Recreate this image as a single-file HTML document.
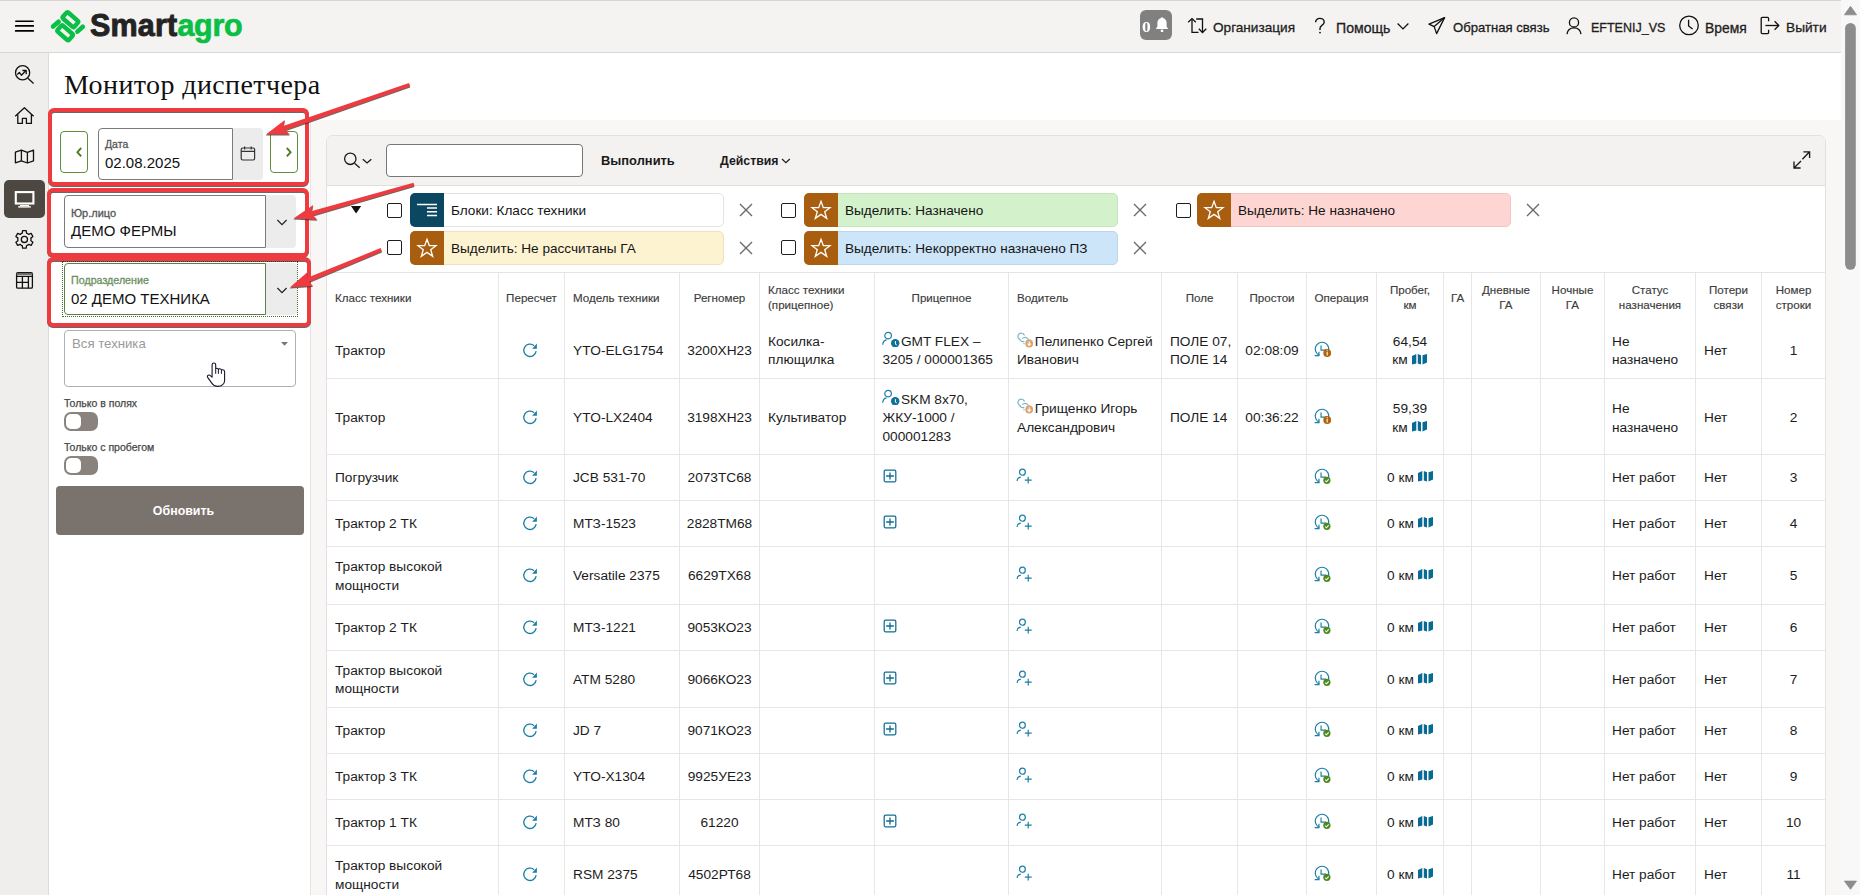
<!DOCTYPE html>
<html><head><meta charset="utf-8">
<style>
*{box-sizing:border-box}
html,body{margin:0;padding:0}
body{width:1860px;height:895px;overflow:hidden;position:relative;background:#fff;font-family:"Liberation Sans",sans-serif;color:#1c1c1c}
.a{position:absolute}
#hdr{left:0;top:0;width:1841px;height:53px;background:#f4f3f1;border-top:1px solid #d6d6d6;border-bottom:1px solid #d9d7d4}
#nav{left:0;top:53px;width:48px;height:842px;background:#efeeec}
#title{left:64px;top:68px;font-family:"Liberation Serif",serif;font-size:28px;letter-spacing:0.4px;color:#111;white-space:nowrap;line-height:34px}
#panel{left:49px;top:120px;width:262px;height:775px;background:#fff;border-right:1px solid #e4e4e4}
#content{left:311px;top:120px;width:1530px;height:775px;background:#f8f7f6}
#sb{left:1841px;top:0;width:19px;height:895px;background:#f8f8f8}
.hi{font-weight:400;-webkit-text-stroke:0.3px #1e1e1e;font-size:13px;color:#1e1e1e;white-space:nowrap;top:19.5px;line-height:16px}
.red{border:4px solid #ee393e;border-radius:5px}
.hc{display:flex;align-items:center;font-size:11.6px;line-height:14.4px;color:#3c3c3c;padding-top:0.5px;-webkit-text-stroke:0.15px #3c3c3c}
.bc{display:flex;align-items:center;font-size:13.7px;line-height:18.2px;color:#1c1c1c;white-space:nowrap;padding-top:2px}
</style></head><body>

<div id="hdr" class="a"></div>
<div id="nav" class="a"></div>
<div id="title" class="a">Монитор диспетчера</div>
<div id="panel" class="a"></div>
<div id="content" class="a"></div>
<div id="sb" class="a"></div>
<div class="a" style="left:48px;top:53px;width:1px;height:842px;background:#dcdbd9"></div>


<!-- nav icons -->
<svg class="a" style="left:0;top:52px" width="48" height="260" viewBox="0 52 48 260" fill="none" stroke="#111" stroke-width="1.3" stroke-linejoin="round">
 <circle cx="22.6" cy="72.7" r="7.1"/><path d="M27.9 78.3L33.6 83.6"/>
 <path d="M17.2 74.6L19.3 72.4L21.4 75.2L25.8 70.8"/><path d="M22.4 70.5H26.2V74.2"/>
 <path d="M15.2 116.3L24.4 107.8L33.6 116.3"/><path d="M17.8 114.2V123.4H22.4V118.4H26.4V123.4H31.4V114.2"/>
 <path d="M15.4 152.2L21.4 150.1L27.4 152.4L33.5 150.1V160.8L27.4 163L21.4 160.8L15.4 162.9Z"/><path d="M21.4 150.1V160.8M27.4 152.4V163"/>
 <path d="M21.18 233.64 L22.26 233.16 L22.61 230.58 L26.19 230.58 L26.54 233.16 L27.78 233.73 L28.74 234.43 L31.14 233.44 L32.93 236.54 L30.88 238.13 L31.00 239.49 L30.88 240.67 L32.93 242.26 L31.14 245.36 L28.74 244.37 L27.62 245.16 L26.54 245.64 L26.19 248.22 L22.61 248.22 L22.26 245.64 L21.02 245.07 L20.06 244.37 L17.66 245.36 L15.87 242.26 L17.92 240.67 L17.80 239.31 L17.92 238.13 L15.87 236.54 L17.66 233.44 L20.06 234.43Z" stroke-width="1.3"/><circle cx="24.4" cy="239.4" r="3.1"/>
 <rect x="16.6" y="272.6" width="15.8" height="15.6" rx="1.2"/><path d="M16.6 273.9H32.4" stroke="#666" stroke-width="2"/>
 <path d="M16.8 276.4H32.2M16.8 282.4H28.4M22.4 276.4V288.2M28.4 276.4V288.2"/>
</svg>
<div class="a" style="left:4px;top:180px;width:41px;height:38px;background:#4d4742;border-radius:5px"></div>
<svg class="a" style="left:4px;top:180px" width="41" height="38" viewBox="4 180 41 38" fill="none" stroke="#fff">
 <rect x="15.8" y="192.1" width="17.6" height="11.4" stroke-width="2.1"/>
 <path d="M20 205.5H29" stroke-width="1"/><path d="M18.2 206.9H30.8" stroke-width="1.4"/>
</svg>


<!-- table start -->
<div class="a" style="left:326px;top:135px;width:1500px;height:780px;background:#fff;border:1px solid #e2e1df;border-radius:7px 7px 0 0"></div>
<div class="a" style="left:327px;top:136px;width:1498px;height:50px;background:#f3f2f0;border-bottom:1px solid #e0dfdd;border-radius:6px 6px 0 0"></div>
<svg class="a" style="left:340px;top:148px" width="36" height="24" viewBox="340 148 36 24" fill="none" stroke="#1a1a1a" stroke-width="1.3"><circle cx="350.3" cy="158.8" r="5.7"/><path d="M354.5 163.2L359.7 167.8"/><path d="M362.8 159.2L367.1 163L371.3 159.2"/></svg>
<div class="a" style="left:386px;top:144px;width:197px;height:33px;background:#fff;border:1.3px solid #777;border-radius:4px"></div>
<div class="a" style="left:601px;top:153px;font-size:12.9px;font-weight:700;color:#1a1a1a;line-height:16px;white-space:nowrap">Выполнить</div>
<div class="a" style="left:720px;top:153px;font-size:12.3px;font-weight:700;color:#1a1a1a;line-height:16px;white-space:nowrap">Действия</div>
<svg class="a" style="left:780px;top:157px" width="12" height="8" viewBox="0 0 12 8" fill="none" stroke="#1a1a1a" stroke-width="1.2"><path d="M2 2L5.9 5.6L9.8 2"/></svg>
<svg class="a" style="left:1788px;top:146px" width="26" height="26" viewBox="1788 146 26 26" fill="none" stroke="#1a1a1a" stroke-width="1.35"><path d="M1809.6 151.8L1802.4 159.2M1803.4 151.8H1809.6V158"/><path d="M1794 168L1801 161M1794 161.6V168H1800.6"/></svg>
<svg class="a" style="left:348px;top:204px" width="16" height="12" viewBox="0 0 16 12"><path d="M3 2H13.2L8.1 9.6Z" fill="#111"/></svg>
<div class="a" style="left:387px;top:203px;width:15px;height:15px;border:1.4px solid #1e1e1e;border-radius:2px;background:#fff"></div>
<div class="a" style="left:410px;top:193px;width:314px;height:34px;background:#fff;border:1px solid #e3e3e3;border-radius:5px"></div>
<div class="a" style="left:410px;top:193px;width:34px;height:34px;background:#0b4760;border-radius:5px 0 0 5px"><svg width="24" height="20" viewBox="0 0 24 20" style="position:absolute;left:5px;top:8px" fill="none" stroke="#fff" stroke-width="1.5"><path d="M2 3.5H22M12 7.1H22M12 10.8H22M12 14.5H22"/></svg></div>
<div class="a" style="left:451px;top:203px;font-size:13.6px;color:#151515;line-height:16px;white-space:nowrap">Блоки: Класс техники</div>
<svg class="a" style="left:739px;top:203px" width="14" height="14" viewBox="0 0 14 14" fill="none" stroke="#6a6a6a" stroke-width="1.4"><path d="M1 1L13 13M13 1L1 13"/></svg>
<div class="a" style="left:781px;top:203px;width:15px;height:15px;border:1.4px solid #1e1e1e;border-radius:2px;background:#fff"></div>
<div class="a" style="left:804px;top:193px;width:314px;height:34px;background:#d3f1cb;border:1px solid #c7e4bf;border-radius:5px"></div>
<div class="a" style="left:804px;top:193px;width:34px;height:34px;background:#a85e0e;border-radius:5px 0 0 5px"><svg width="22" height="22" viewBox="0 0 22 22" style="position:absolute;left:6px;top:6px" fill="none" stroke="#fff" stroke-width="1.3" stroke-linejoin="miter"><path d="M11 2.3L13.3 8.6L20 8.7L14.7 12.8L16.7 19.3L11 15.4L5.3 19.3L7.3 12.8L2 8.7L8.7 8.6Z"/></svg></div>
<div class="a" style="left:845px;top:203px;font-size:13.6px;color:#151515;line-height:16px;white-space:nowrap">Выделить: Назначено</div>
<svg class="a" style="left:1133px;top:203px" width="14" height="14" viewBox="0 0 14 14" fill="none" stroke="#6a6a6a" stroke-width="1.4"><path d="M1 1L13 13M13 1L1 13"/></svg>
<div class="a" style="left:1176px;top:203px;width:15px;height:15px;border:1.4px solid #1e1e1e;border-radius:2px;background:#fff"></div>
<div class="a" style="left:1197px;top:193px;width:314px;height:34px;background:#fdd6d3;border:1px solid #f1c6c3;border-radius:5px"></div>
<div class="a" style="left:1197px;top:193px;width:34px;height:34px;background:#a85e0e;border-radius:5px 0 0 5px"><svg width="22" height="22" viewBox="0 0 22 22" style="position:absolute;left:6px;top:6px" fill="none" stroke="#fff" stroke-width="1.3" stroke-linejoin="miter"><path d="M11 2.3L13.3 8.6L20 8.7L14.7 12.8L16.7 19.3L11 15.4L5.3 19.3L7.3 12.8L2 8.7L8.7 8.6Z"/></svg></div>
<div class="a" style="left:1238px;top:203px;font-size:13.6px;color:#151515;line-height:16px;white-space:nowrap">Выделить: Не назначено</div>
<svg class="a" style="left:1526px;top:203px" width="14" height="14" viewBox="0 0 14 14" fill="none" stroke="#6a6a6a" stroke-width="1.4"><path d="M1 1L13 13M13 1L1 13"/></svg>
<div class="a" style="left:387px;top:240px;width:15px;height:15px;border:1.4px solid #1e1e1e;border-radius:2px;background:#fff"></div>
<div class="a" style="left:410px;top:231px;width:314px;height:34px;background:#fdf3d1;border:1px solid #efe3bd;border-radius:5px"></div>
<div class="a" style="left:410px;top:231px;width:34px;height:34px;background:#a85e0e;border-radius:5px 0 0 5px"><svg width="22" height="22" viewBox="0 0 22 22" style="position:absolute;left:6px;top:6px" fill="none" stroke="#fff" stroke-width="1.3" stroke-linejoin="miter"><path d="M11 2.3L13.3 8.6L20 8.7L14.7 12.8L16.7 19.3L11 15.4L5.3 19.3L7.3 12.8L2 8.7L8.7 8.6Z"/></svg></div>
<div class="a" style="left:451px;top:241px;font-size:13.6px;color:#151515;line-height:16px;white-space:nowrap">Выделить: Не рассчитаны ГА</div>
<svg class="a" style="left:739px;top:241px" width="14" height="14" viewBox="0 0 14 14" fill="none" stroke="#6a6a6a" stroke-width="1.4"><path d="M1 1L13 13M13 1L1 13"/></svg>
<div class="a" style="left:781px;top:240px;width:15px;height:15px;border:1.4px solid #1e1e1e;border-radius:2px;background:#fff"></div>
<div class="a" style="left:804px;top:231px;width:314px;height:34px;background:#cde5f9;border:1px solid #bcd6ec;border-radius:5px"></div>
<div class="a" style="left:804px;top:231px;width:34px;height:34px;background:#a85e0e;border-radius:5px 0 0 5px"><svg width="22" height="22" viewBox="0 0 22 22" style="position:absolute;left:6px;top:6px" fill="none" stroke="#fff" stroke-width="1.3" stroke-linejoin="miter"><path d="M11 2.3L13.3 8.6L20 8.7L14.7 12.8L16.7 19.3L11 15.4L5.3 19.3L7.3 12.8L2 8.7L8.7 8.6Z"/></svg></div>
<div class="a" style="left:845px;top:241px;font-size:13.6px;color:#151515;line-height:16px;white-space:nowrap">Выделить: Некорректно назначено ПЗ</div>
<svg class="a" style="left:1133px;top:241px" width="14" height="14" viewBox="0 0 14 14" fill="none" stroke="#6a6a6a" stroke-width="1.4"><path d="M1 1L13 13M13 1L1 13"/></svg>
<div class="a" style="left:326px;top:272px;width:1500px;height:1px;background:#e4e4e4"></div>
<div class="a" style="left:498px;top:273px;width:1px;height:622px;background:#e6e6e6"></div>
<div class="a" style="left:564px;top:273px;width:1px;height:622px;background:#e6e6e6"></div>
<div class="a" style="left:679px;top:273px;width:1px;height:622px;background:#e6e6e6"></div>
<div class="a" style="left:759px;top:273px;width:1px;height:622px;background:#e6e6e6"></div>
<div class="a" style="left:874px;top:273px;width:1px;height:622px;background:#e6e6e6"></div>
<div class="a" style="left:1008px;top:273px;width:1px;height:622px;background:#e6e6e6"></div>
<div class="a" style="left:1161px;top:273px;width:1px;height:622px;background:#e6e6e6"></div>
<div class="a" style="left:1237px;top:273px;width:1px;height:622px;background:#e6e6e6"></div>
<div class="a" style="left:1306px;top:273px;width:1px;height:622px;background:#e6e6e6"></div>
<div class="a" style="left:1376px;top:273px;width:1px;height:622px;background:#e6e6e6"></div>
<div class="a" style="left:1443px;top:273px;width:1px;height:622px;background:#e6e6e6"></div>
<div class="a" style="left:1471px;top:273px;width:1px;height:622px;background:#e6e6e6"></div>
<div class="a" style="left:1540px;top:273px;width:1px;height:622px;background:#e6e6e6"></div>
<div class="a" style="left:1604px;top:273px;width:1px;height:622px;background:#e6e6e6"></div>
<div class="a" style="left:1695px;top:273px;width:1px;height:622px;background:#e6e6e6"></div>
<div class="a" style="left:1761px;top:273px;width:1px;height:622px;background:#e6e6e6"></div>
<div class="a" style="left:1825px;top:273px;width:1px;height:622px;background:#e4e4e4"></div>
<div class="a" style="left:327px;top:378px;width:1498px;height:1px;background:#e6e6e6"></div>
<div class="a" style="left:327px;top:454px;width:1498px;height:1px;background:#e6e6e6"></div>
<div class="a" style="left:327px;top:500px;width:1498px;height:1px;background:#e6e6e6"></div>
<div class="a" style="left:327px;top:546px;width:1498px;height:1px;background:#e6e6e6"></div>
<div class="a" style="left:327px;top:604px;width:1498px;height:1px;background:#e6e6e6"></div>
<div class="a" style="left:327px;top:650px;width:1498px;height:1px;background:#e6e6e6"></div>
<div class="a" style="left:327px;top:707px;width:1498px;height:1px;background:#e6e6e6"></div>
<div class="a" style="left:327px;top:753px;width:1498px;height:1px;background:#e6e6e6"></div>
<div class="a" style="left:327px;top:799px;width:1498px;height:1px;background:#e6e6e6"></div>
<div class="a" style="left:327px;top:845px;width:1498px;height:1px;background:#e6e6e6"></div>
<div class="a hc" style="left:327px;top:273px;width:171px;height:49px;justify-content:flex-start;text-align:left;padding-left:8px;">Класс техники</div>
<div class="a hc" style="left:499px;top:273px;width:65px;height:49px;justify-content:center;text-align:center;">Пересчет</div>
<div class="a hc" style="left:565px;top:273px;width:114px;height:49px;justify-content:flex-start;text-align:left;padding-left:8px;">Модель техники</div>
<div class="a hc" style="left:680px;top:273px;width:79px;height:49px;justify-content:center;text-align:center;">Регномер</div>
<div class="a hc" style="left:760px;top:273px;width:114px;height:49px;justify-content:flex-start;text-align:left;padding-left:8px;">Класс техники<br>(прицепное)</div>
<div class="a hc" style="left:875px;top:273px;width:133px;height:49px;justify-content:center;text-align:center;">Прицепное</div>
<div class="a hc" style="left:1009px;top:273px;width:152px;height:49px;justify-content:flex-start;text-align:left;padding-left:8px;">Водитель</div>
<div class="a hc" style="left:1162px;top:273px;width:75px;height:49px;justify-content:center;text-align:center;">Поле</div>
<div class="a hc" style="left:1238px;top:273px;width:68px;height:49px;justify-content:center;text-align:center;">Простои</div>
<div class="a hc" style="left:1307px;top:273px;width:69px;height:49px;justify-content:center;text-align:center;">Операция</div>
<div class="a hc" style="left:1377px;top:273px;width:66px;height:49px;justify-content:center;text-align:center;">Пробег,<br>км</div>
<div class="a hc" style="left:1444px;top:273px;width:27px;height:49px;justify-content:center;text-align:center;">ГА</div>
<div class="a hc" style="left:1472px;top:273px;width:68px;height:49px;justify-content:center;text-align:center;">Дневные<br>ГА</div>
<div class="a hc" style="left:1541px;top:273px;width:63px;height:49px;justify-content:center;text-align:center;">Ночные<br>ГА</div>
<div class="a hc" style="left:1605px;top:273px;width:90px;height:49px;justify-content:center;text-align:center;">Статус<br>назначения</div>
<div class="a hc" style="left:1696px;top:273px;width:65px;height:49px;justify-content:center;text-align:center;">Потери<br>связи</div>
<div class="a hc" style="left:1762px;top:273px;width:63px;height:49px;justify-content:center;text-align:center;">Номер<br>строки</div>
<div class="a bc" style="left:327px;top:322px;width:171px;height:56px;justify-content:flex-start;text-align:left;padding-left:8px;"><span>Трактор</span></div>
<svg class="a" style="left:522.06px;top:341.80px" width="16" height="16" viewBox="0 0 16 16"><path d="M14.14 9.16A6.2 6.2 0 1 1 12.15 3.69" fill="none" stroke="#1b7fa6" stroke-width="1.3"/><path d="M14.9 1.6V6.7H10.2Z" fill="#1b7fa6"/></svg>
<div class="a bc" style="left:565px;top:322px;width:114px;height:56px;justify-content:flex-start;text-align:left;padding-left:8px;"><span>YTO-ELG1754</span></div>
<div class="a bc" style="left:680px;top:322px;width:79px;height:56px;justify-content:center;text-align:center;"><span>3200ХН23</span></div>
<div class="a bc" style="left:760px;top:322px;width:114px;height:56px;justify-content:flex-start;text-align:left;padding-left:8px;"><span>Косилка-<br>плющилка</span></div>
<svg class="a" style="left:881.00px;top:330.00px" width="19" height="17" viewBox="0 0 19 17"><ellipse cx="7.1" cy="5.6" rx="3.3" ry="3.2" fill="none" stroke="#1b7fa6" stroke-width="1.2"/><path d="M1.7 14.7C1.9 12.2 3.4 10.2 5.6 9.8" fill="none" stroke="#1b7fa6" stroke-width="1.2"/><circle cx="14.2" cy="13.2" r="4.2" fill="#0f7099"/><path d="M14.4 11.1V14.2L15.8 14.9" fill="none" stroke="#fff" stroke-width="1"/></svg>
<div class="a bc" style="left:875px;top:322px;width:133px;height:56px;justify-content:flex-start;text-align:left;padding-left:8px;"><span style="display:block;text-indent:18.4px;margin-left:-0.5px">GMT FLEX –<br>3205 / 000001365</span></div>
<svg class="a" style="left:1016.00px;top:331.00px" width="18" height="17" viewBox="0 0 18 17"><path d="M8.6 4.4C8 3.2 7 2.2 5.2 2.2C3.2 2.2 1.9 3.8 1.9 5.4C1.9 6.4 2.4 7.2 3.2 8L5.4 10.2C6.2 10.8 7.2 10.9 8.2 10.4" fill="none" stroke="#84b6ca" stroke-width="1.25"/><path d="M6.2 7.7C7 6.8 7.8 6.4 9 6.4C10 6.4 10.8 6.8 11.6 7.6L13.4 9.4" fill="none" stroke="#84b6ca" stroke-width="1.25"/><path d="M7.4 12.4L8.6 13" stroke="#84b6ca" stroke-width="1.1"/><circle cx="13.2" cy="12.5" r="3.9" fill="#d9a36f"/><path d="M13.2 10.3V14.2M11.5 12.6L13.2 14.4L14.9 12.6" fill="none" stroke="#fff" stroke-width="1.1"/></svg>
<div class="a bc" style="left:1009px;top:322px;width:152px;height:56px;justify-content:flex-start;text-align:left;padding-left:8px;"><span style="display:block;text-indent:17.8px">Пелипенко Сергей<br>Иванович</span></div>
<div class="a bc" style="left:1162px;top:322px;width:75px;height:56px;justify-content:flex-start;text-align:left;padding-left:8px;"><span>ПОЛЕ 07,<br>ПОЛЕ 14</span></div>
<div class="a bc" style="left:1238px;top:322px;width:68px;height:56px;justify-content:center;text-align:center;"><span>02:08:09</span></div>
<svg class="a" style="left:1313.45px;top:339.50px" width="20" height="20" viewBox="0 0 20 20"><path d="M6.25 15.17A6.75 6.75 0 1 1 15.58 10.52" fill="none" stroke="#1b7fa6" stroke-width="1.2"/><path d="M5.95 11.7V15.7H1.65" fill="none" stroke="#1b7fa6" stroke-width="1.2"/><path d="M8.05 5.5V10.1H13.15" fill="none" stroke="#1b7fa6" stroke-width="1.15"/><circle cx="14.2" cy="13" r="3.9" fill="#b0620e"/><path d="M14.2 12.1V15.6" stroke="#f3e6b0" stroke-width="1.3"/><circle cx="14.2" cy="10.8" r="0.7" fill="#f3e6b0"/></svg>
<svg class="a" style="left:1411.00px;top:351.80px" width="17" height="14" viewBox="0 0 17 14"><path d="M1 3.9L5.3 2.1V11.5L1 12.6Z M6.8 2.1L10 3.3V12.6L6.8 11.5Z M11.5 3.3L16 1.9V10.4L11.5 12.6Z" fill="#086b94"/></svg>
<div class="a bc" style="left:1377px;top:322px;width:66px;height:56px;justify-content:center;text-align:center"><span>64,54<br>км<span style="display:inline-block;width:20px"></span></span></div>
<div class="a bc" style="left:1605px;top:322px;width:90px;height:56px;justify-content:flex-start;text-align:left;padding-left:7px;"><span>Не<br>назначено</span></div>
<div class="a bc" style="left:1696px;top:322px;width:65px;height:56px;justify-content:flex-start;text-align:left;padding-left:8px;"><span>Нет</span></div>
<div class="a bc" style="left:1762px;top:322px;width:63px;height:56px;justify-content:center;text-align:center;"><span>1</span></div>
<div class="a bc" style="left:327px;top:380px;width:171px;height:75px;justify-content:flex-start;text-align:left;padding-left:8px;"><span>Трактор</span></div>
<svg class="a" style="left:522.06px;top:409.30px" width="16" height="16" viewBox="0 0 16 16"><path d="M14.14 9.16A6.2 6.2 0 1 1 12.15 3.69" fill="none" stroke="#1b7fa6" stroke-width="1.3"/><path d="M14.9 1.6V6.7H10.2Z" fill="#1b7fa6"/></svg>
<div class="a bc" style="left:565px;top:380px;width:114px;height:75px;justify-content:flex-start;text-align:left;padding-left:8px;"><span>YTO-LX2404</span></div>
<div class="a bc" style="left:680px;top:380px;width:79px;height:75px;justify-content:center;text-align:center;"><span>3198ХН23</span></div>
<div class="a bc" style="left:760px;top:380px;width:114px;height:75px;justify-content:flex-start;text-align:left;padding-left:8px;"><span>Культиватор</span></div>
<svg class="a" style="left:881.00px;top:387.50px" width="19" height="17" viewBox="0 0 19 17"><ellipse cx="7.1" cy="5.6" rx="3.3" ry="3.2" fill="none" stroke="#1b7fa6" stroke-width="1.2"/><path d="M1.7 14.7C1.9 12.2 3.4 10.2 5.6 9.8" fill="none" stroke="#1b7fa6" stroke-width="1.2"/><circle cx="14.2" cy="13.2" r="4.2" fill="#0f7099"/><path d="M14.4 11.1V14.2L15.8 14.9" fill="none" stroke="#fff" stroke-width="1"/></svg>
<div class="a bc" style="left:875px;top:380px;width:133px;height:75px;justify-content:flex-start;text-align:left;padding-left:8px;"><span style="display:block;text-indent:18.4px;margin-left:-0.5px">SKM 8х70,<br>ЖКУ-1000 /<br>000001283</span></div>
<svg class="a" style="left:1016.00px;top:397.00px" width="18" height="17" viewBox="0 0 18 17"><path d="M8.6 4.4C8 3.2 7 2.2 5.2 2.2C3.2 2.2 1.9 3.8 1.9 5.4C1.9 6.4 2.4 7.2 3.2 8L5.4 10.2C6.2 10.8 7.2 10.9 8.2 10.4" fill="none" stroke="#84b6ca" stroke-width="1.25"/><path d="M6.2 7.7C7 6.8 7.8 6.4 9 6.4C10 6.4 10.8 6.8 11.6 7.6L13.4 9.4" fill="none" stroke="#84b6ca" stroke-width="1.25"/><path d="M7.4 12.4L8.6 13" stroke="#84b6ca" stroke-width="1.1"/><circle cx="13.2" cy="12.5" r="3.9" fill="#d9a36f"/><path d="M13.2 10.3V14.2M11.5 12.6L13.2 14.4L14.9 12.6" fill="none" stroke="#fff" stroke-width="1.1"/></svg>
<div class="a bc" style="left:1009px;top:380px;width:152px;height:75px;justify-content:flex-start;text-align:left;padding-left:8px;"><span style="display:block;text-indent:17.8px">Грищенко Игорь<br>Александрович</span></div>
<div class="a bc" style="left:1162px;top:380px;width:75px;height:75px;justify-content:flex-start;text-align:left;padding-left:8px;"><span>ПОЛЕ 14</span></div>
<div class="a bc" style="left:1238px;top:380px;width:68px;height:75px;justify-content:center;text-align:center;"><span>00:36:22</span></div>
<svg class="a" style="left:1313.45px;top:407.00px" width="20" height="20" viewBox="0 0 20 20"><path d="M6.25 15.17A6.75 6.75 0 1 1 15.58 10.52" fill="none" stroke="#1b7fa6" stroke-width="1.2"/><path d="M5.95 11.7V15.7H1.65" fill="none" stroke="#1b7fa6" stroke-width="1.2"/><path d="M8.05 5.5V10.1H13.15" fill="none" stroke="#1b7fa6" stroke-width="1.15"/><circle cx="14.2" cy="13" r="3.9" fill="#b0620e"/><path d="M14.2 12.1V15.6" stroke="#f3e6b0" stroke-width="1.3"/><circle cx="14.2" cy="10.8" r="0.7" fill="#f3e6b0"/></svg>
<svg class="a" style="left:1411.00px;top:419.30px" width="17" height="14" viewBox="0 0 17 14"><path d="M1 3.9L5.3 2.1V11.5L1 12.6Z M6.8 2.1L10 3.3V12.6L6.8 11.5Z M11.5 3.3L16 1.9V10.4L11.5 12.6Z" fill="#086b94"/></svg>
<div class="a bc" style="left:1377px;top:380px;width:66px;height:75px;justify-content:center;text-align:center"><span>59,39<br>км<span style="display:inline-block;width:20px"></span></span></div>
<div class="a bc" style="left:1605px;top:380px;width:90px;height:75px;justify-content:flex-start;text-align:left;padding-left:7px;"><span>Не<br>назначено</span></div>
<div class="a bc" style="left:1696px;top:380px;width:65px;height:75px;justify-content:flex-start;text-align:left;padding-left:8px;"><span>Нет</span></div>
<div class="a bc" style="left:1762px;top:380px;width:63px;height:75px;justify-content:center;text-align:center;"><span>2</span></div>
<div class="a bc" style="left:327px;top:455px;width:171px;height:45px;justify-content:flex-start;text-align:left;padding-left:8px;"><span>Погрузчик</span></div>
<svg class="a" style="left:522.06px;top:469.30px" width="16" height="16" viewBox="0 0 16 16"><path d="M14.14 9.16A6.2 6.2 0 1 1 12.15 3.69" fill="none" stroke="#1b7fa6" stroke-width="1.3"/><path d="M14.9 1.6V6.7H10.2Z" fill="#1b7fa6"/></svg>
<div class="a bc" style="left:565px;top:455px;width:114px;height:45px;justify-content:flex-start;text-align:left;padding-left:8px;"><span>JCB 531-70</span></div>
<div class="a bc" style="left:680px;top:455px;width:79px;height:45px;justify-content:center;text-align:center;"><span>2073ТС68</span></div>
<svg class="a" style="left:881.90px;top:468.35px" width="16" height="16" viewBox="0 0 16 16"><rect x="2.2" y="2.2" width="11.6" height="11.6" rx="1.2" fill="none" stroke="#0f6e96" stroke-width="1.25"/><path d="M8 4.6V11.4M4.1 8H11.9" stroke="#0f6e96" stroke-width="1.35"/></svg>
<svg class="a" style="left:1015.30px;top:467.40px" width="18" height="18" viewBox="0 0 18 18"><ellipse cx="7.42" cy="5.18" rx="2.9" ry="3.05" fill="none" stroke="#1b7fa6" stroke-width="1.2"/><path d="M2.1 14.1C2.1 12.2 3.6 10.6 5.8 10.2" fill="none" stroke="#1b7fa6" stroke-width="1.2"/><path d="M9.8 13.1H16.7M13.2 9.7V16.4" stroke="#1b7fa6" stroke-width="1.2"/></svg>
<svg class="a" style="left:1313.45px;top:467.00px" width="20" height="20" viewBox="0 0 20 20"><path d="M6.25 15.17A6.75 6.75 0 1 1 15.58 10.52" fill="none" stroke="#1b7fa6" stroke-width="1.2"/><path d="M5.95 11.7V15.7H1.65" fill="none" stroke="#1b7fa6" stroke-width="1.2"/><path d="M8.05 5.5V10.1H13.15" fill="none" stroke="#1b7fa6" stroke-width="1.15"/><circle cx="13.9" cy="13.3" r="3.6" fill="#4b8a1f"/><path d="M12.2 13.6L13.5 14.8L15.7 12.3" fill="none" stroke="#fff" stroke-width="1.1"/></svg>
<svg class="a" style="left:1417.00px;top:469.00px" width="17" height="14" viewBox="0 0 17 14"><path d="M1 3.9L5.3 2.1V11.5L1 12.6Z M6.8 2.1L10 3.3V12.6L6.8 11.5Z M11.5 3.3L16 1.9V10.4L11.5 12.6Z" fill="#086b94"/></svg>
<div class="a bc" style="left:1387px;top:455px;width:40px;height:45px">0 км</div>
<div class="a bc" style="left:1605px;top:455px;width:90px;height:45px;justify-content:flex-start;text-align:left;padding-left:7px;"><span>Нет работ</span></div>
<div class="a bc" style="left:1696px;top:455px;width:65px;height:45px;justify-content:flex-start;text-align:left;padding-left:8px;"><span>Нет</span></div>
<div class="a bc" style="left:1762px;top:455px;width:63px;height:45px;justify-content:center;text-align:center;"><span>3</span></div>
<div class="a bc" style="left:327px;top:501px;width:171px;height:45px;justify-content:flex-start;text-align:left;padding-left:8px;"><span>Трактор 2 ТК</span></div>
<svg class="a" style="left:522.06px;top:515.30px" width="16" height="16" viewBox="0 0 16 16"><path d="M14.14 9.16A6.2 6.2 0 1 1 12.15 3.69" fill="none" stroke="#1b7fa6" stroke-width="1.3"/><path d="M14.9 1.6V6.7H10.2Z" fill="#1b7fa6"/></svg>
<div class="a bc" style="left:565px;top:501px;width:114px;height:45px;justify-content:flex-start;text-align:left;padding-left:8px;"><span>МТЗ-1523</span></div>
<div class="a bc" style="left:680px;top:501px;width:79px;height:45px;justify-content:center;text-align:center;"><span>2828ТМ68</span></div>
<svg class="a" style="left:881.90px;top:514.35px" width="16" height="16" viewBox="0 0 16 16"><rect x="2.2" y="2.2" width="11.6" height="11.6" rx="1.2" fill="none" stroke="#0f6e96" stroke-width="1.25"/><path d="M8 4.6V11.4M4.1 8H11.9" stroke="#0f6e96" stroke-width="1.35"/></svg>
<svg class="a" style="left:1015.30px;top:513.40px" width="18" height="18" viewBox="0 0 18 18"><ellipse cx="7.42" cy="5.18" rx="2.9" ry="3.05" fill="none" stroke="#1b7fa6" stroke-width="1.2"/><path d="M2.1 14.1C2.1 12.2 3.6 10.6 5.8 10.2" fill="none" stroke="#1b7fa6" stroke-width="1.2"/><path d="M9.8 13.1H16.7M13.2 9.7V16.4" stroke="#1b7fa6" stroke-width="1.2"/></svg>
<svg class="a" style="left:1313.45px;top:513.00px" width="20" height="20" viewBox="0 0 20 20"><path d="M6.25 15.17A6.75 6.75 0 1 1 15.58 10.52" fill="none" stroke="#1b7fa6" stroke-width="1.2"/><path d="M5.95 11.7V15.7H1.65" fill="none" stroke="#1b7fa6" stroke-width="1.2"/><path d="M8.05 5.5V10.1H13.15" fill="none" stroke="#1b7fa6" stroke-width="1.15"/><circle cx="13.9" cy="13.3" r="3.6" fill="#4b8a1f"/><path d="M12.2 13.6L13.5 14.8L15.7 12.3" fill="none" stroke="#fff" stroke-width="1.1"/></svg>
<svg class="a" style="left:1417.00px;top:515.00px" width="17" height="14" viewBox="0 0 17 14"><path d="M1 3.9L5.3 2.1V11.5L1 12.6Z M6.8 2.1L10 3.3V12.6L6.8 11.5Z M11.5 3.3L16 1.9V10.4L11.5 12.6Z" fill="#086b94"/></svg>
<div class="a bc" style="left:1387px;top:501px;width:40px;height:45px">0 км</div>
<div class="a bc" style="left:1605px;top:501px;width:90px;height:45px;justify-content:flex-start;text-align:left;padding-left:7px;"><span>Нет работ</span></div>
<div class="a bc" style="left:1696px;top:501px;width:65px;height:45px;justify-content:flex-start;text-align:left;padding-left:8px;"><span>Нет</span></div>
<div class="a bc" style="left:1762px;top:501px;width:63px;height:45px;justify-content:center;text-align:center;"><span>4</span></div>
<div class="a bc" style="left:327px;top:547px;width:171px;height:57px;justify-content:flex-start;text-align:left;padding-left:8px;"><span>Трактор высокой<br>мощности</span></div>
<svg class="a" style="left:522.06px;top:567.30px" width="16" height="16" viewBox="0 0 16 16"><path d="M14.14 9.16A6.2 6.2 0 1 1 12.15 3.69" fill="none" stroke="#1b7fa6" stroke-width="1.3"/><path d="M14.9 1.6V6.7H10.2Z" fill="#1b7fa6"/></svg>
<div class="a bc" style="left:565px;top:547px;width:114px;height:57px;justify-content:flex-start;text-align:left;padding-left:8px;"><span>Versatile 2375</span></div>
<div class="a bc" style="left:680px;top:547px;width:79px;height:57px;justify-content:center;text-align:center;"><span>6629ТХ68</span></div>
<svg class="a" style="left:1015.30px;top:565.40px" width="18" height="18" viewBox="0 0 18 18"><ellipse cx="7.42" cy="5.18" rx="2.9" ry="3.05" fill="none" stroke="#1b7fa6" stroke-width="1.2"/><path d="M2.1 14.1C2.1 12.2 3.6 10.6 5.8 10.2" fill="none" stroke="#1b7fa6" stroke-width="1.2"/><path d="M9.8 13.1H16.7M13.2 9.7V16.4" stroke="#1b7fa6" stroke-width="1.2"/></svg>
<svg class="a" style="left:1313.45px;top:565.00px" width="20" height="20" viewBox="0 0 20 20"><path d="M6.25 15.17A6.75 6.75 0 1 1 15.58 10.52" fill="none" stroke="#1b7fa6" stroke-width="1.2"/><path d="M5.95 11.7V15.7H1.65" fill="none" stroke="#1b7fa6" stroke-width="1.2"/><path d="M8.05 5.5V10.1H13.15" fill="none" stroke="#1b7fa6" stroke-width="1.15"/><circle cx="13.9" cy="13.3" r="3.6" fill="#4b8a1f"/><path d="M12.2 13.6L13.5 14.8L15.7 12.3" fill="none" stroke="#fff" stroke-width="1.1"/></svg>
<svg class="a" style="left:1417.00px;top:567.00px" width="17" height="14" viewBox="0 0 17 14"><path d="M1 3.9L5.3 2.1V11.5L1 12.6Z M6.8 2.1L10 3.3V12.6L6.8 11.5Z M11.5 3.3L16 1.9V10.4L11.5 12.6Z" fill="#086b94"/></svg>
<div class="a bc" style="left:1387px;top:547px;width:40px;height:57px">0 км</div>
<div class="a bc" style="left:1605px;top:547px;width:90px;height:57px;justify-content:flex-start;text-align:left;padding-left:7px;"><span>Нет работ</span></div>
<div class="a bc" style="left:1696px;top:547px;width:65px;height:57px;justify-content:flex-start;text-align:left;padding-left:8px;"><span>Нет</span></div>
<div class="a bc" style="left:1762px;top:547px;width:63px;height:57px;justify-content:center;text-align:center;"><span>5</span></div>
<div class="a bc" style="left:327px;top:605px;width:171px;height:45px;justify-content:flex-start;text-align:left;padding-left:8px;"><span>Трактор 2 ТК</span></div>
<svg class="a" style="left:522.06px;top:619.30px" width="16" height="16" viewBox="0 0 16 16"><path d="M14.14 9.16A6.2 6.2 0 1 1 12.15 3.69" fill="none" stroke="#1b7fa6" stroke-width="1.3"/><path d="M14.9 1.6V6.7H10.2Z" fill="#1b7fa6"/></svg>
<div class="a bc" style="left:565px;top:605px;width:114px;height:45px;justify-content:flex-start;text-align:left;padding-left:8px;"><span>МТЗ-1221</span></div>
<div class="a bc" style="left:680px;top:605px;width:79px;height:45px;justify-content:center;text-align:center;"><span>9053КО23</span></div>
<svg class="a" style="left:881.90px;top:618.35px" width="16" height="16" viewBox="0 0 16 16"><rect x="2.2" y="2.2" width="11.6" height="11.6" rx="1.2" fill="none" stroke="#0f6e96" stroke-width="1.25"/><path d="M8 4.6V11.4M4.1 8H11.9" stroke="#0f6e96" stroke-width="1.35"/></svg>
<svg class="a" style="left:1015.30px;top:617.40px" width="18" height="18" viewBox="0 0 18 18"><ellipse cx="7.42" cy="5.18" rx="2.9" ry="3.05" fill="none" stroke="#1b7fa6" stroke-width="1.2"/><path d="M2.1 14.1C2.1 12.2 3.6 10.6 5.8 10.2" fill="none" stroke="#1b7fa6" stroke-width="1.2"/><path d="M9.8 13.1H16.7M13.2 9.7V16.4" stroke="#1b7fa6" stroke-width="1.2"/></svg>
<svg class="a" style="left:1313.45px;top:617.00px" width="20" height="20" viewBox="0 0 20 20"><path d="M6.25 15.17A6.75 6.75 0 1 1 15.58 10.52" fill="none" stroke="#1b7fa6" stroke-width="1.2"/><path d="M5.95 11.7V15.7H1.65" fill="none" stroke="#1b7fa6" stroke-width="1.2"/><path d="M8.05 5.5V10.1H13.15" fill="none" stroke="#1b7fa6" stroke-width="1.15"/><circle cx="13.9" cy="13.3" r="3.6" fill="#4b8a1f"/><path d="M12.2 13.6L13.5 14.8L15.7 12.3" fill="none" stroke="#fff" stroke-width="1.1"/></svg>
<svg class="a" style="left:1417.00px;top:619.00px" width="17" height="14" viewBox="0 0 17 14"><path d="M1 3.9L5.3 2.1V11.5L1 12.6Z M6.8 2.1L10 3.3V12.6L6.8 11.5Z M11.5 3.3L16 1.9V10.4L11.5 12.6Z" fill="#086b94"/></svg>
<div class="a bc" style="left:1387px;top:605px;width:40px;height:45px">0 км</div>
<div class="a bc" style="left:1605px;top:605px;width:90px;height:45px;justify-content:flex-start;text-align:left;padding-left:7px;"><span>Нет работ</span></div>
<div class="a bc" style="left:1696px;top:605px;width:65px;height:45px;justify-content:flex-start;text-align:left;padding-left:8px;"><span>Нет</span></div>
<div class="a bc" style="left:1762px;top:605px;width:63px;height:45px;justify-content:center;text-align:center;"><span>6</span></div>
<div class="a bc" style="left:327px;top:651px;width:171px;height:56px;justify-content:flex-start;text-align:left;padding-left:8px;"><span>Трактор высокой<br>мощности</span></div>
<svg class="a" style="left:522.06px;top:670.80px" width="16" height="16" viewBox="0 0 16 16"><path d="M14.14 9.16A6.2 6.2 0 1 1 12.15 3.69" fill="none" stroke="#1b7fa6" stroke-width="1.3"/><path d="M14.9 1.6V6.7H10.2Z" fill="#1b7fa6"/></svg>
<div class="a bc" style="left:565px;top:651px;width:114px;height:56px;justify-content:flex-start;text-align:left;padding-left:8px;"><span>ATM 5280</span></div>
<div class="a bc" style="left:680px;top:651px;width:79px;height:56px;justify-content:center;text-align:center;"><span>9066КО23</span></div>
<svg class="a" style="left:881.90px;top:669.85px" width="16" height="16" viewBox="0 0 16 16"><rect x="2.2" y="2.2" width="11.6" height="11.6" rx="1.2" fill="none" stroke="#0f6e96" stroke-width="1.25"/><path d="M8 4.6V11.4M4.1 8H11.9" stroke="#0f6e96" stroke-width="1.35"/></svg>
<svg class="a" style="left:1015.30px;top:668.90px" width="18" height="18" viewBox="0 0 18 18"><ellipse cx="7.42" cy="5.18" rx="2.9" ry="3.05" fill="none" stroke="#1b7fa6" stroke-width="1.2"/><path d="M2.1 14.1C2.1 12.2 3.6 10.6 5.8 10.2" fill="none" stroke="#1b7fa6" stroke-width="1.2"/><path d="M9.8 13.1H16.7M13.2 9.7V16.4" stroke="#1b7fa6" stroke-width="1.2"/></svg>
<svg class="a" style="left:1313.45px;top:668.50px" width="20" height="20" viewBox="0 0 20 20"><path d="M6.25 15.17A6.75 6.75 0 1 1 15.58 10.52" fill="none" stroke="#1b7fa6" stroke-width="1.2"/><path d="M5.95 11.7V15.7H1.65" fill="none" stroke="#1b7fa6" stroke-width="1.2"/><path d="M8.05 5.5V10.1H13.15" fill="none" stroke="#1b7fa6" stroke-width="1.15"/><circle cx="13.9" cy="13.3" r="3.6" fill="#4b8a1f"/><path d="M12.2 13.6L13.5 14.8L15.7 12.3" fill="none" stroke="#fff" stroke-width="1.1"/></svg>
<svg class="a" style="left:1417.00px;top:670.50px" width="17" height="14" viewBox="0 0 17 14"><path d="M1 3.9L5.3 2.1V11.5L1 12.6Z M6.8 2.1L10 3.3V12.6L6.8 11.5Z M11.5 3.3L16 1.9V10.4L11.5 12.6Z" fill="#086b94"/></svg>
<div class="a bc" style="left:1387px;top:651px;width:40px;height:56px">0 км</div>
<div class="a bc" style="left:1605px;top:651px;width:90px;height:56px;justify-content:flex-start;text-align:left;padding-left:7px;"><span>Нет работ</span></div>
<div class="a bc" style="left:1696px;top:651px;width:65px;height:56px;justify-content:flex-start;text-align:left;padding-left:8px;"><span>Нет</span></div>
<div class="a bc" style="left:1762px;top:651px;width:63px;height:56px;justify-content:center;text-align:center;"><span>7</span></div>
<div class="a bc" style="left:327px;top:708px;width:171px;height:45px;justify-content:flex-start;text-align:left;padding-left:8px;"><span>Трактор</span></div>
<svg class="a" style="left:522.06px;top:722.30px" width="16" height="16" viewBox="0 0 16 16"><path d="M14.14 9.16A6.2 6.2 0 1 1 12.15 3.69" fill="none" stroke="#1b7fa6" stroke-width="1.3"/><path d="M14.9 1.6V6.7H10.2Z" fill="#1b7fa6"/></svg>
<div class="a bc" style="left:565px;top:708px;width:114px;height:45px;justify-content:flex-start;text-align:left;padding-left:8px;"><span>JD 7</span></div>
<div class="a bc" style="left:680px;top:708px;width:79px;height:45px;justify-content:center;text-align:center;"><span>9071КО23</span></div>
<svg class="a" style="left:881.90px;top:721.35px" width="16" height="16" viewBox="0 0 16 16"><rect x="2.2" y="2.2" width="11.6" height="11.6" rx="1.2" fill="none" stroke="#0f6e96" stroke-width="1.25"/><path d="M8 4.6V11.4M4.1 8H11.9" stroke="#0f6e96" stroke-width="1.35"/></svg>
<svg class="a" style="left:1015.30px;top:720.40px" width="18" height="18" viewBox="0 0 18 18"><ellipse cx="7.42" cy="5.18" rx="2.9" ry="3.05" fill="none" stroke="#1b7fa6" stroke-width="1.2"/><path d="M2.1 14.1C2.1 12.2 3.6 10.6 5.8 10.2" fill="none" stroke="#1b7fa6" stroke-width="1.2"/><path d="M9.8 13.1H16.7M13.2 9.7V16.4" stroke="#1b7fa6" stroke-width="1.2"/></svg>
<svg class="a" style="left:1313.45px;top:720.00px" width="20" height="20" viewBox="0 0 20 20"><path d="M6.25 15.17A6.75 6.75 0 1 1 15.58 10.52" fill="none" stroke="#1b7fa6" stroke-width="1.2"/><path d="M5.95 11.7V15.7H1.65" fill="none" stroke="#1b7fa6" stroke-width="1.2"/><path d="M8.05 5.5V10.1H13.15" fill="none" stroke="#1b7fa6" stroke-width="1.15"/><circle cx="13.9" cy="13.3" r="3.6" fill="#4b8a1f"/><path d="M12.2 13.6L13.5 14.8L15.7 12.3" fill="none" stroke="#fff" stroke-width="1.1"/></svg>
<svg class="a" style="left:1417.00px;top:722.00px" width="17" height="14" viewBox="0 0 17 14"><path d="M1 3.9L5.3 2.1V11.5L1 12.6Z M6.8 2.1L10 3.3V12.6L6.8 11.5Z M11.5 3.3L16 1.9V10.4L11.5 12.6Z" fill="#086b94"/></svg>
<div class="a bc" style="left:1387px;top:708px;width:40px;height:45px">0 км</div>
<div class="a bc" style="left:1605px;top:708px;width:90px;height:45px;justify-content:flex-start;text-align:left;padding-left:7px;"><span>Нет работ</span></div>
<div class="a bc" style="left:1696px;top:708px;width:65px;height:45px;justify-content:flex-start;text-align:left;padding-left:8px;"><span>Нет</span></div>
<div class="a bc" style="left:1762px;top:708px;width:63px;height:45px;justify-content:center;text-align:center;"><span>8</span></div>
<div class="a bc" style="left:327px;top:754px;width:171px;height:45px;justify-content:flex-start;text-align:left;padding-left:8px;"><span>Трактор 3 ТК</span></div>
<svg class="a" style="left:522.06px;top:768.30px" width="16" height="16" viewBox="0 0 16 16"><path d="M14.14 9.16A6.2 6.2 0 1 1 12.15 3.69" fill="none" stroke="#1b7fa6" stroke-width="1.3"/><path d="M14.9 1.6V6.7H10.2Z" fill="#1b7fa6"/></svg>
<div class="a bc" style="left:565px;top:754px;width:114px;height:45px;justify-content:flex-start;text-align:left;padding-left:8px;"><span>YTO-X1304</span></div>
<div class="a bc" style="left:680px;top:754px;width:79px;height:45px;justify-content:center;text-align:center;"><span>9925УЕ23</span></div>
<svg class="a" style="left:1015.30px;top:766.40px" width="18" height="18" viewBox="0 0 18 18"><ellipse cx="7.42" cy="5.18" rx="2.9" ry="3.05" fill="none" stroke="#1b7fa6" stroke-width="1.2"/><path d="M2.1 14.1C2.1 12.2 3.6 10.6 5.8 10.2" fill="none" stroke="#1b7fa6" stroke-width="1.2"/><path d="M9.8 13.1H16.7M13.2 9.7V16.4" stroke="#1b7fa6" stroke-width="1.2"/></svg>
<svg class="a" style="left:1313.45px;top:766.00px" width="20" height="20" viewBox="0 0 20 20"><path d="M6.25 15.17A6.75 6.75 0 1 1 15.58 10.52" fill="none" stroke="#1b7fa6" stroke-width="1.2"/><path d="M5.95 11.7V15.7H1.65" fill="none" stroke="#1b7fa6" stroke-width="1.2"/><path d="M8.05 5.5V10.1H13.15" fill="none" stroke="#1b7fa6" stroke-width="1.15"/><circle cx="13.9" cy="13.3" r="3.6" fill="#4b8a1f"/><path d="M12.2 13.6L13.5 14.8L15.7 12.3" fill="none" stroke="#fff" stroke-width="1.1"/></svg>
<svg class="a" style="left:1417.00px;top:768.00px" width="17" height="14" viewBox="0 0 17 14"><path d="M1 3.9L5.3 2.1V11.5L1 12.6Z M6.8 2.1L10 3.3V12.6L6.8 11.5Z M11.5 3.3L16 1.9V10.4L11.5 12.6Z" fill="#086b94"/></svg>
<div class="a bc" style="left:1387px;top:754px;width:40px;height:45px">0 км</div>
<div class="a bc" style="left:1605px;top:754px;width:90px;height:45px;justify-content:flex-start;text-align:left;padding-left:7px;"><span>Нет работ</span></div>
<div class="a bc" style="left:1696px;top:754px;width:65px;height:45px;justify-content:flex-start;text-align:left;padding-left:8px;"><span>Нет</span></div>
<div class="a bc" style="left:1762px;top:754px;width:63px;height:45px;justify-content:center;text-align:center;"><span>9</span></div>
<div class="a bc" style="left:327px;top:800px;width:171px;height:45px;justify-content:flex-start;text-align:left;padding-left:8px;"><span>Трактор 1 ТК</span></div>
<svg class="a" style="left:522.06px;top:814.30px" width="16" height="16" viewBox="0 0 16 16"><path d="M14.14 9.16A6.2 6.2 0 1 1 12.15 3.69" fill="none" stroke="#1b7fa6" stroke-width="1.3"/><path d="M14.9 1.6V6.7H10.2Z" fill="#1b7fa6"/></svg>
<div class="a bc" style="left:565px;top:800px;width:114px;height:45px;justify-content:flex-start;text-align:left;padding-left:8px;"><span>МТЗ 80</span></div>
<div class="a bc" style="left:680px;top:800px;width:79px;height:45px;justify-content:center;text-align:center;"><span>61220</span></div>
<svg class="a" style="left:881.90px;top:813.35px" width="16" height="16" viewBox="0 0 16 16"><rect x="2.2" y="2.2" width="11.6" height="11.6" rx="1.2" fill="none" stroke="#0f6e96" stroke-width="1.25"/><path d="M8 4.6V11.4M4.1 8H11.9" stroke="#0f6e96" stroke-width="1.35"/></svg>
<svg class="a" style="left:1015.30px;top:812.40px" width="18" height="18" viewBox="0 0 18 18"><ellipse cx="7.42" cy="5.18" rx="2.9" ry="3.05" fill="none" stroke="#1b7fa6" stroke-width="1.2"/><path d="M2.1 14.1C2.1 12.2 3.6 10.6 5.8 10.2" fill="none" stroke="#1b7fa6" stroke-width="1.2"/><path d="M9.8 13.1H16.7M13.2 9.7V16.4" stroke="#1b7fa6" stroke-width="1.2"/></svg>
<svg class="a" style="left:1313.45px;top:812.00px" width="20" height="20" viewBox="0 0 20 20"><path d="M6.25 15.17A6.75 6.75 0 1 1 15.58 10.52" fill="none" stroke="#1b7fa6" stroke-width="1.2"/><path d="M5.95 11.7V15.7H1.65" fill="none" stroke="#1b7fa6" stroke-width="1.2"/><path d="M8.05 5.5V10.1H13.15" fill="none" stroke="#1b7fa6" stroke-width="1.15"/><circle cx="13.9" cy="13.3" r="3.6" fill="#4b8a1f"/><path d="M12.2 13.6L13.5 14.8L15.7 12.3" fill="none" stroke="#fff" stroke-width="1.1"/></svg>
<svg class="a" style="left:1417.00px;top:814.00px" width="17" height="14" viewBox="0 0 17 14"><path d="M1 3.9L5.3 2.1V11.5L1 12.6Z M6.8 2.1L10 3.3V12.6L6.8 11.5Z M11.5 3.3L16 1.9V10.4L11.5 12.6Z" fill="#086b94"/></svg>
<div class="a bc" style="left:1387px;top:800px;width:40px;height:45px">0 км</div>
<div class="a bc" style="left:1605px;top:800px;width:90px;height:45px;justify-content:flex-start;text-align:left;padding-left:7px;"><span>Нет работ</span></div>
<div class="a bc" style="left:1696px;top:800px;width:65px;height:45px;justify-content:flex-start;text-align:left;padding-left:8px;"><span>Нет</span></div>
<div class="a bc" style="left:1762px;top:800px;width:63px;height:45px;justify-content:center;text-align:center;"><span>10</span></div>
<div class="a bc" style="left:327px;top:846px;width:171px;height:57px;justify-content:flex-start;text-align:left;padding-left:8px;"><span>Трактор высокой<br>мощности</span></div>
<svg class="a" style="left:522.06px;top:866.30px" width="16" height="16" viewBox="0 0 16 16"><path d="M14.14 9.16A6.2 6.2 0 1 1 12.15 3.69" fill="none" stroke="#1b7fa6" stroke-width="1.3"/><path d="M14.9 1.6V6.7H10.2Z" fill="#1b7fa6"/></svg>
<div class="a bc" style="left:565px;top:846px;width:114px;height:57px;justify-content:flex-start;text-align:left;padding-left:8px;"><span>RSM 2375</span></div>
<div class="a bc" style="left:680px;top:846px;width:79px;height:57px;justify-content:center;text-align:center;"><span>4502РТ68</span></div>
<svg class="a" style="left:1015.30px;top:864.40px" width="18" height="18" viewBox="0 0 18 18"><ellipse cx="7.42" cy="5.18" rx="2.9" ry="3.05" fill="none" stroke="#1b7fa6" stroke-width="1.2"/><path d="M2.1 14.1C2.1 12.2 3.6 10.6 5.8 10.2" fill="none" stroke="#1b7fa6" stroke-width="1.2"/><path d="M9.8 13.1H16.7M13.2 9.7V16.4" stroke="#1b7fa6" stroke-width="1.2"/></svg>
<svg class="a" style="left:1313.45px;top:864.00px" width="20" height="20" viewBox="0 0 20 20"><path d="M6.25 15.17A6.75 6.75 0 1 1 15.58 10.52" fill="none" stroke="#1b7fa6" stroke-width="1.2"/><path d="M5.95 11.7V15.7H1.65" fill="none" stroke="#1b7fa6" stroke-width="1.2"/><path d="M8.05 5.5V10.1H13.15" fill="none" stroke="#1b7fa6" stroke-width="1.15"/><circle cx="13.9" cy="13.3" r="3.6" fill="#4b8a1f"/><path d="M12.2 13.6L13.5 14.8L15.7 12.3" fill="none" stroke="#fff" stroke-width="1.1"/></svg>
<svg class="a" style="left:1417.00px;top:866.00px" width="17" height="14" viewBox="0 0 17 14"><path d="M1 3.9L5.3 2.1V11.5L1 12.6Z M6.8 2.1L10 3.3V12.6L6.8 11.5Z M11.5 3.3L16 1.9V10.4L11.5 12.6Z" fill="#086b94"/></svg>
<div class="a bc" style="left:1387px;top:846px;width:40px;height:57px">0 км</div>
<div class="a bc" style="left:1605px;top:846px;width:90px;height:57px;justify-content:flex-start;text-align:left;padding-left:7px;"><span>Нет работ</span></div>
<div class="a bc" style="left:1696px;top:846px;width:65px;height:57px;justify-content:flex-start;text-align:left;padding-left:8px;"><span>Нет</span></div>
<div class="a bc" style="left:1762px;top:846px;width:63px;height:57px;justify-content:center;text-align:center;"><span>11</span></div>
<!-- table end -->
<!-- panel content -->
<div class="a" style="left:60px;top:131px;width:28px;height:42px;border:1px solid #5f8f3a;border-radius:4px"></div>
<svg class="a" style="left:73.5px;top:145px" width="10" height="14" viewBox="0 0 10 14" fill="none" stroke="#557a2c" stroke-width="1.9"><path d="M7.2 3L3.4 7.2L7.2 11.4"/></svg>
<div class="a" style="left:98px;top:128px;width:135px;height:52px;border:1px solid #7b7b7b;border-radius:4px 0 0 4px;background:#fff"></div>
<div class="a" style="left:233px;top:128px;width:30px;height:52px;background:#ececec;border-radius:0 4px 4px 0"></div>
<svg class="a" style="left:239px;top:145px" width="18" height="17" viewBox="0 0 18 17" fill="none" stroke="#333" stroke-width="1.2">
 <rect x="2.2" y="3" width="13.4" height="12" rx="1.4"/><path d="M2.2 6.4H15.6M5.6 1.4V4.4M12.2 1.4V4.4"/>
</svg>
<div class="a" style="left:105px;top:137.5px;font-size:10.5px;-webkit-text-stroke:0.3px #555;color:#555;line-height:12px">Дата</div>
<div class="a" style="left:105px;top:154px;font-size:15px;color:#111;line-height:18px">02.08.2025</div>
<div class="a" style="left:270px;top:131px;width:28px;height:42px;border:1px solid #5f8f3a;border-radius:4px"></div>
<svg class="a" style="left:284px;top:145px" width="10" height="14" viewBox="0 0 10 14" fill="none" stroke="#557a2c" stroke-width="1.9"><path d="M2.8 3L6.6 7.2L2.8 11.4"/></svg>

<div class="a" style="left:64px;top:195px;width:202px;height:53px;border:1px solid #7b7b7b;border-radius:4px 0 0 4px;background:#fff"></div>
<div class="a" style="left:266px;top:195px;width:30px;height:53px;background:#ececec;border-radius:0 4px 4px 0"></div>
<svg class="a" style="left:275px;top:217px" width="14" height="10" viewBox="0 0 14 10" fill="none" stroke="#222" stroke-width="1.2"><path d="M2.4 3L7 7.6L11.6 3"/></svg>
<div class="a" style="left:71px;top:206.5px;font-size:11px;-webkit-text-stroke:0.3px #555;color:#555;line-height:12px">Юр.лицо</div>
<div class="a" style="left:71px;top:222px;font-size:15px;color:#111;line-height:18px">ДЕМО ФЕРМЫ</div>

<div class="a" style="left:62px;top:261px;width:236px;height:56px;border:1px dotted #4a6a3a"></div>
<div class="a" style="left:64px;top:263px;width:202px;height:52px;border:1px solid #5d7f4a;border-radius:4px 0 0 4px;background:#fff"></div>
<div class="a" style="left:266px;top:263px;width:31px;height:52px;background:#ececec;border-radius:0 4px 4px 0"></div>
<svg class="a" style="left:275px;top:285px" width="14" height="10" viewBox="0 0 14 10" fill="none" stroke="#222" stroke-width="1.2"><path d="M2.4 3L7 7.6L11.6 3"/></svg>
<div class="a" style="left:71px;top:273.5px;font-size:10.7px;-webkit-text-stroke:0.3px #6b8f62;color:#6b8f62;line-height:12px">Подразделение</div>
<div class="a" style="left:71px;top:290px;font-size:15px;color:#111;line-height:18px">02 ДЕМО ТЕХНИКА</div>

<div class="a" style="left:64px;top:330px;width:232px;height:57px;border:1px solid #b0b0b0;border-radius:4px;background:#fff"></div>
<div class="a" style="left:72px;top:336px;font-size:13.2px;color:#9a9a9a;line-height:16px">Вся техника</div>
<svg class="a" style="left:280px;top:341px" width="9" height="6" viewBox="0 0 9 6"><path d="M1 1H8L4.5 4.8Z" fill="#777"/></svg>

<div class="a" style="left:64px;top:397px;font-size:10.5px;-webkit-text-stroke:0.25px #474747;color:#474747;line-height:12px">Только в полях</div>
<div class="a" style="left:64px;top:412px;width:34px;height:19px;background:#8a837d;border-radius:7px"></div>
<div class="a" style="left:66px;top:414px;width:15px;height:15px;background:#fff;border-radius:5px"></div>
<div class="a" style="left:64px;top:441px;font-size:10.5px;-webkit-text-stroke:0.25px #474747;color:#474747;line-height:12px">Только с пробегом</div>
<div class="a" style="left:64px;top:456px;width:34px;height:19px;background:#8a837d;border-radius:7px"></div>
<div class="a" style="left:66px;top:458px;width:15px;height:15px;background:#fff;border-radius:5px"></div>

<div class="a" style="left:56px;top:486px;width:248px;height:49px;background:#7a726c;border-radius:4px"></div>
<div class="a" style="left:59.5px;top:503px;width:248px;text-align:center;font-size:12.4px;font-weight:700;color:#fff;line-height:16px">Обновить</div>

<!-- header content -->
<svg class="a" style="left:0;top:0" width="50" height="52">
 <g stroke="#000" stroke-linecap="round"><path d="M15.8 21.2H33.2" stroke-width="1.5"/><path d="M15.8 25.9H33.2" stroke-width="1.9"/><path d="M15.8 30.9H33.2" stroke-width="1.9"/></g>
</svg>
<svg class="a" style="left:45px;top:5px" width="50" height="42" viewBox="0 0 50 42">
 <g fill="none" stroke="#0abf45" stroke-linecap="round">
  <rect x="-7.6" y="-4" width="15.2" height="8" rx="1.6" stroke-width="4.4" transform="translate(25.4 14.7) rotate(41)"/>
  <rect x="-7.6" y="-4" width="15.2" height="8" rx="1.6" stroke-width="4.4" transform="translate(20.1 27.8) rotate(41)"/>
  <path d="M8 21.6L13.6 16.7" stroke-width="4.6"/>
  <path d="M32.4 26.6L37.8 21.7" stroke-width="4.6"/>
 </g>
</svg>
<div class="a" style="left:90px;top:7px;font-size:30.5px;font-weight:700;line-height:36px;white-space:nowrap;letter-spacing:0.2px"><span style="color:#232323;-webkit-text-stroke:0.9px #232323">Smart</span><span style="color:#09bf44;-webkit-text-stroke:0.7px #09bf44;letter-spacing:-0.3px">agro</span></div>

<div class="a" style="left:1140px;top:10px;width:32px;height:30px;background:#808080;border-radius:6px"></div>
<div class="a" style="left:1141.5px;top:19.5px;font-family:'Liberation Serif',serif;font-size:14px;font-weight:700;color:#fff;line-height:16px;transform:scaleX(1.25);transform-origin:0 0">0</div>
<svg class="a" style="left:1154px;top:16px" width="16" height="17" viewBox="0 0 16 17">
 <path d="M8 1.2c.6 0 1 .4 1 .9 2.3.5 3.6 2.5 3.6 4.8v3.6l1.6 2.4H1.8l1.6-2.4V6.9c0-2.3 1.3-4.3 3.6-4.8 0-.5.4-.9 1-.9z" fill="#fff"/>
 <rect x="6.8" y="13.6" width="2.4" height="2.4" fill="#fff"/>
</svg>
<svg class="a" style="left:1186px;top:17px" width="22" height="17" viewBox="0 0 22 17" fill="none" stroke="#111" stroke-width="1.3">
 <path d="M2.2 5.2L6 1.6L9.8 5.2"/><path d="M6 1.8V15.3H12.5"/>
 <path d="M10.2 2H16.5V15.4"/><path d="M12.8 11.8L16.5 15.5L20.3 11.8"/>
</svg>
<div class="a hi" style="left:1213px;font-size:13.6px">Организация</div>
<svg class="a" style="left:1312px;top:17px" width="16" height="18" viewBox="0 0 16 18" fill="none" stroke="#111" stroke-width="1.4">
 <path d="M3.6 5.2C3.6 2.9 5.4 1.4 7.8 1.4S12.2 2.9 12.2 5c0 1.7-1 2.6-2.3 3.4-1.3.8-1.9 1.7-1.9 3.2v1.4"/>
 <circle cx="8" cy="15.6" r="0.9" fill="#111" stroke="none"/>
</svg>
<div class="a hi" style="left:1336px;font-size:14.1px">Помощь</div>
<svg class="a" style="left:1396px;top:22px" width="14" height="9" viewBox="0 0 14 9" fill="none" stroke="#111" stroke-width="1.3"><path d="M1.6 1.5L7 6.9L12.4 1.5"/></svg>

<svg class="a" style="left:1427px;top:16px" width="20" height="20" viewBox="0 0 20 20" fill="none" stroke="#111" stroke-width="1.3" stroke-linejoin="round">
 <path d="M17.6 1.6L2 8.2L7.2 10.6L9.6 17.6Z"/><path d="M17.6 1.6L7.2 10.6"/>
</svg>
<div class="a hi" style="left:1453px;font-size:13.1px">Обратная связь</div>
<svg class="a" style="left:1565px;top:16px" width="18" height="19" viewBox="0 0 18 19" fill="none" stroke="#111" stroke-width="1.3">
 <circle cx="9" cy="6.4" r="4.6"/><path d="M2 18.2c.5-3.8 3.3-6.3 7-6.3s6.5 2.5 7 6.3"/>
</svg>
<div class="a hi" style="left:1591px;font-size:12.5px">EFTENIJ_VS</div>
<svg class="a" style="left:1678px;top:15px" width="22" height="21" viewBox="0 0 22 21" fill="none" stroke="#111" stroke-width="1.3">
 <circle cx="11" cy="10.4" r="9.3"/><path d="M10.6 4.8V10.9L14.6 14"/>
</svg>
<div class="a hi" style="left:1705px;font-size:13.9px">Время</div>
<svg class="a" style="left:1760px;top:16px" width="21" height="19" viewBox="0 0 21 19" fill="none" stroke="#111" stroke-width="1.3" stroke-linejoin="round">
 <path d="M8.6 5.2V2.4c0-.6-.4-1-1-1H2.2c-.6 0-1 .4-1 1v14.2c0 .6.4 1 1 1h5.4c.6 0 1-.4 1-1v-2.8"/>
 <path d="M5.4 9.5H18.8"/><path d="M14.6 5.3L18.8 9.5L14.6 13.7"/>
</svg>
<div class="a hi" style="left:1786px;font-size:13.7px">Выйти</div>


<!-- annot start -->
<div class="a" style="left:48px;top:108px;width:261px;height:78px;border:4px solid #ee3b3f;border-radius:6px;filter:drop-shadow(0.5px 1px 0.7px rgba(40,40,40,.7))"></div>
<div class="a" style="left:47px;top:188px;width:262px;height:69px;border:4px solid #ee3b3f;border-radius:6px;filter:drop-shadow(0.5px 1px 0.7px rgba(40,40,40,.7))"></div>
<div class="a" style="left:47px;top:257px;width:264px;height:70px;border:4px solid #ee3b3f;border-radius:6px;filter:drop-shadow(0.5px 1px 0.7px rgba(40,40,40,.7))"></div>
<svg class="a" style="left:0;top:0;filter:drop-shadow(0.5px 1px 0.7px rgba(40,40,40,.7))" width="430" height="300" viewBox="0 0 430 300"><path d="M265.8 134.6 L284.8 119.9 L283.9 125.8 L409.0 83.1 L410.2 86.5 L285.5 130.3 L289.9 134.4Z" fill="#ee3b3f"/><path d="M293.4 218.6 L313.2 205.0 L312.0 210.9 L413.5 182.7 L414.5 186.1 L313.3 215.4 L317.4 219.8Z" fill="#ee3b3f"/><path d="M289.8 287.6 L307.3 272.3 L307.4 277.8 L380.6 248.1 L382.0 251.5 L309.2 282.1 L313.0 286.1Z" fill="#ee3b3f"/></svg>
<svg class="a" style="left:1841px;top:0" width="19" height="895" viewBox="1841 0 19 895"><path d="M1850.5 6.3L1856.6 14.8H1844.4Z" fill="#8c8c8c" stroke="#8c8c8c" stroke-width="0.8" stroke-linejoin="round"/><rect x="1845.1" y="23" width="10.7" height="246.7" rx="5.35" fill="#8c8c8c"/><path d="M1844.4 881.1H1856.5L1850.5 889.3Z" fill="#8c8c8c" stroke="#8c8c8c" stroke-width="0.8" stroke-linejoin="round"/></svg>
<svg class="a" style="left:200px;top:355px" width="35" height="35" viewBox="0 0 35 35"><path d="M12.1 22.2V9.8C12.1 8.6 12.9 8 13.9 8C14.9 8 15.7 8.6 15.7 9.8V13.8C15.9 13.4 16.4 13.2 17 13.2C17.8 13.2 18.4 13.7 18.4 14.4C18.6 14 19.1 13.8 19.8 13.8C20.7 13.8 21.3 14.3 21.4 15C21.7 14.8 22.2 14.7 22.8 14.8C23.9 15 24.6 15.6 24.6 16.8V25.4C24.6 28.8 21.8 31.4 17.8 31.4C14.8 31.4 12.8 29.8 11.4 27.6L7.8 22.6C7.1 21.6 7.4 20.6 8.2 20.2C9 19.8 9.9 20 10.6 20.8Z" fill="#fff" stroke="#16162a" stroke-width="1.1" stroke-linejoin="round"/><path d="M15.7 13.8V18.8M18.4 14.4V18.8M21.4 15V18.8" stroke="#16162a" stroke-width="1"/></svg>
<!-- annot end -->
</body></html>
